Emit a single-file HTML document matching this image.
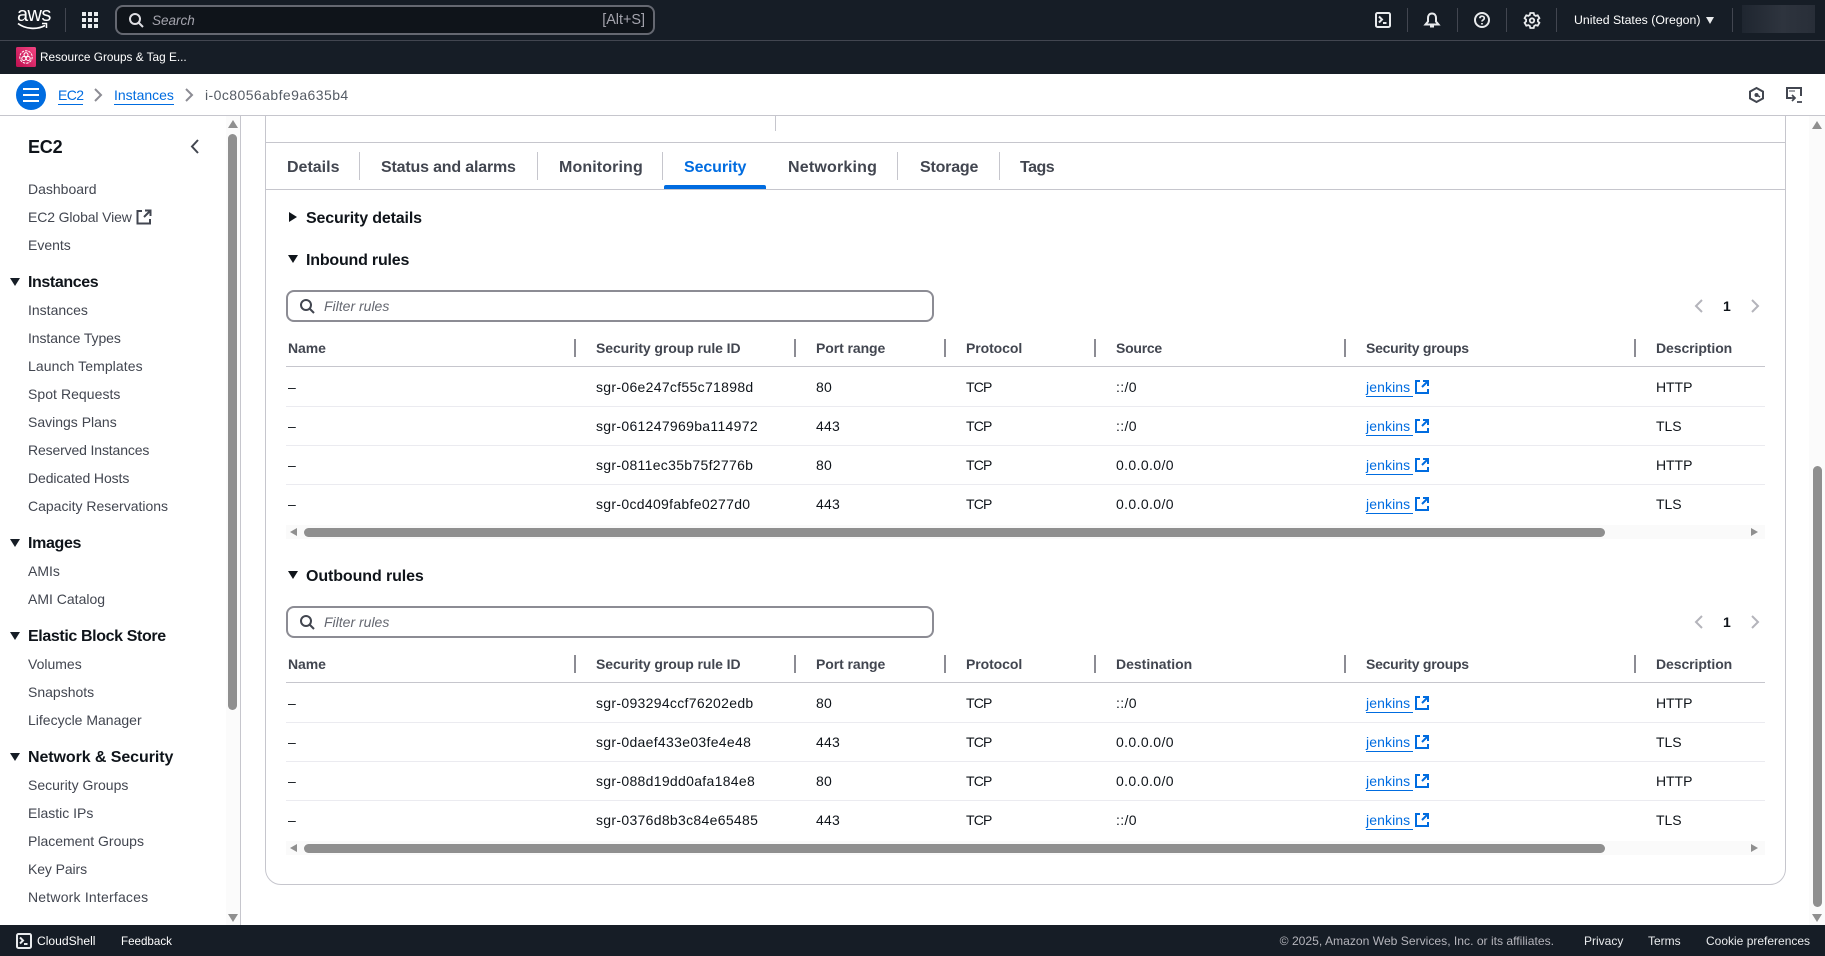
<!DOCTYPE html>
<html lang="en"><head><meta charset="utf-8"><title>Instance security</title>
<style>
*{box-sizing:border-box}
html,body{margin:0;padding:0;width:1825px;height:956px;overflow:hidden;background:#fff;font-family:"Liberation Sans",sans-serif;color:#0f141a}
.a{position:absolute}
.t{position:absolute;white-space:nowrap;line-height:20px;height:20px}
svg{position:absolute;overflow:visible}
.top{background:#161d26}
.d{position:absolute;width:1px;background:#424650}
.nv{font-size:14px;color:#424650;left:28px}
.sh{font-size:16px;font-weight:700;left:28px;color:#0f141a}
.tri{position:absolute;left:10px;width:0;height:0;border-left:5.500px solid transparent;border-right:5.500px solid transparent;border-top:8.500px solid #161d26}
.tab{font-size:16px;font-weight:700;color:#424650;top:158px}
.td{position:absolute;top:152px;height:28px;width:1px;background:#c6c6cd}
.h{font-size:14px;font-weight:700;color:#424650;letter-spacing:-.08px}
.c{font-size:14px;color:#0f141a}
.l{position:absolute;left:286px;width:1479px;height:1px;background:#ebebf0}
.hd{position:absolute;width:2px;height:18px;background:#8c8c94}
.lk{font-size:14px;color:#006ce0;left:1366px;width:47px;border-bottom:1px solid #006ce0;height:20px;letter-spacing:.1px}
.ft{font-size:12px;color:#d1d5db;top:931px}
.x1{left:288px}.x2{left:596px}.x3{left:816px}.x4{left:966px}.x5{left:1116px}.x7{left:1656px}
.c.x2{letter-spacing:.31px}.c.x3{letter-spacing:.2px}.c.x4{letter-spacing:-.8px}.c.x5{letter-spacing:.38px}.c.x7{letter-spacing:-.05px}
.h.x5{letter-spacing:-.25px}
.h.sg{letter-spacing:-.25px;left:1366px}
</style></head><body>

<!-- top bars -->
<div class="a top" style="left:0;top:0;width:1825px;height:74px"></div>
<div class="a" style="left:0;top:40px;width:1825px;height:1px;background:#424650"></div>
<div class="t" style="left:17px;top:4px;font-size:20px;color:#fff;letter-spacing:-.6px;line-height:22px;height:22px">aws</div>
<svg style="left:17px;top:22px" width="32" height="9" viewBox="0 0 32 9" fill="none"><path d="M1 1.500C8 7 20 8 28 3.500" stroke="#fff" stroke-width="1.700"/><path d="M25 1.500h4.500V6" stroke="#fff" stroke-width="1.500"/></svg>
<div class="d" style="left:65px;top:8px;height:24px"></div>
<svg style="left:82px;top:12px" width="16" height="16" viewBox="0 0 16 16" fill="#e9ebed"><rect x="0" y="0" width="4" height="4"/><rect x="6" y="0" width="4" height="4"/><rect x="12" y="0" width="4" height="4"/><rect x="0" y="6" width="4" height="4"/><rect x="6" y="6" width="4" height="4"/><rect x="12" y="6" width="4" height="4"/><rect x="0" y="12" width="4" height="4"/><rect x="6" y="12" width="4" height="4"/><rect x="12" y="12" width="4" height="4"/></svg>
<div class="a" style="left:115px;top:5px;width:540px;height:30px;background:#0f141a;border:2px solid #656871;border-radius:8px"></div>
<svg style="left:128px;top:12px" width="16" height="16" viewBox="0 0 16 16" fill="none" stroke="#dedee3" stroke-width="2"><circle cx="7" cy="7" r="5"/><path d="m15 15-4.500-4.500"/></svg>
<div class="t" style="left:152px;top:11px;font-size:13.500px;font-style:italic;color:#a4a4ad">Search</div>
<div class="t" style="right:1180px;top:10px;font-size:14.400px;color:#a4a4ad">[Alt+S]</div>

<svg style="left:1375px;top:12px" width="16" height="16" viewBox="0 0 16 16" fill="none" stroke="#e9ebed" stroke-width="2"><rect x="1" y="1" width="14" height="14" rx="1.500"/><path d="m4 4.500 3 3-3 3M8 11h3.500"/></svg>
<div class="d" style="left:1407px;top:8px;height:24px"></div>
<svg style="left:1424px;top:12px" width="16" height="16" viewBox="0 0 16 16" fill="none" stroke="#e9ebed" stroke-width="2"><path d="M8 1.500C5.500 1.500 4 3.500 4 6v3.500L1.500 12.500h13L12 9.500V6C12 3.500 10.500 1.500 8 1.500Z"/><path d="M6 14.500h4"/></svg>
<div class="d" style="left:1457px;top:8px;height:24px"></div>
<svg style="left:1474px;top:12px" width="16" height="16" viewBox="0 0 16 16" fill="none" stroke="#e9ebed" stroke-width="2"><circle cx="8" cy="8" r="7"/><path d="M5.800 6.200C6 4.800 7 4.200 8 4.200c1.300 0 2.300.8 2.300 2 0 1.700-2.300 1.700-2.300 3.300" stroke-width="1.700"/><path d="M8 11v1.500" stroke-width="1.700"/></svg>
<div class="d" style="left:1506px;top:8px;height:24px"></div>
<svg style="left:1524px;top:12px" width="16" height="16" viewBox="0 0 16 16" fill="none" stroke="#e9ebed" stroke-width="1.800"><path d="M6.300 1h3.400l.5 2 1.500.9 2-.6 1.700 2.900-1.500 1.400v1.800l1.500 1.400-1.700 2.900-2-.6-1.500.9-.5 2H6.300l-.5-2-1.500-.9-2 .6L.6 10.800l1.500-1.400V7.600L.6 6.200l1.700-2.900 2 .6L5.800 3Z"/><circle cx="8" cy="8.500" r="2.200"/></svg>
<div class="d" style="left:1556px;top:8px;height:24px"></div>
<div class="t" style="left:1574px;top:10px;font-size:12.300px;color:#fff">United States (Oregon)</div>
<div class="a" style="left:1706px;top:17px;width:0;height:0;border-left:4px solid transparent;border-right:4px solid transparent;border-top:7px solid #e9ebed"></div>
<div class="d" style="left:1732px;top:8px;height:24px"></div>
<div class="a" style="left:1742px;top:5px;width:73px;height:28px;background:linear-gradient(90deg,#1f2630,#2e343e 55%,#282e38)"></div>

<svg style="left:16px;top:47px" width="20" height="20" viewBox="0 0 20 20"><defs><linearGradient id="g" x1="0" y1="1" x2="1" y2="0"><stop offset="0" stop-color="#bd0f4f"/><stop offset="1" stop-color="#f34482"/></linearGradient></defs><rect width="20" height="20" rx="1.500" fill="url(#g)"/><g fill="none" stroke="#fff" stroke-width="1"><circle cx="10" cy="10" r="6.200" stroke-dasharray="2.500 1"/><circle cx="10" cy="7.800" r="2"/><circle cx="7.800" cy="11.500" r="2"/><circle cx="12.200" cy="11.500" r="2"/></g></svg>
<div class="t" style="left:40px;top:47px;font-size:11.800px;color:#fff">Resource Groups &amp; Tag E...</div>

<!-- breadcrumbs -->
<div class="a" style="left:0;top:115px;width:1825px;height:1px;background:#c6c6cd"></div>
<div class="a" style="left:16px;top:80px;width:30px;height:30px;border-radius:50%;background:#006ce0"></div>
<div class="a" style="left:23px;top:88px;width:16px;height:2px;background:#fff"></div>
<div class="a" style="left:23px;top:94px;width:16px;height:2px;background:#fff"></div>
<div class="a" style="left:23px;top:100px;width:16px;height:2px;background:#fff"></div>
<div class="t" style="left:58px;top:85px;font-size:14px;color:#006ce0;border-bottom:1px solid #006ce0;height:20px;letter-spacing:-.6px">EC2</div>
<svg style="left:94px;top:88px" width="8" height="14" viewBox="0 0 8 14" fill="none" stroke="#8c8c94" stroke-width="2"><path d="m1 1 6 6-6 6"/></svg>
<div class="t" style="left:114px;top:85px;font-size:14px;color:#006ce0;border-bottom:1px solid #006ce0;height:20px">Instances</div>
<svg style="left:185px;top:88px" width="8" height="14" viewBox="0 0 8 14" fill="none" stroke="#8c8c94" stroke-width="2"><path d="m1 1 6 6-6 6"/></svg>
<div class="t" style="left:205px;top:85px;font-size:14px;color:#545b64;letter-spacing:.43px">i-0c8056abfe9a635b4</div>
<svg style="left:1749px;top:87px" width="15" height="16" viewBox="0 0 15 16" fill="none" stroke="#424650" stroke-width="2"><path d="M7.500 1 14 4.600v6.800L7.500 15 1 11.400V4.600Z"/><circle cx="7.500" cy="8" r="2" fill="#424650" stroke="none"/><path d="m8 8 3 2" stroke-width="1.500"/></svg>
<svg style="left:1786px;top:87px" width="16" height="16" viewBox="0 0 16 16" fill="none" stroke="#424650" stroke-width="2"><path d="M5 11H1V1h14v8"/><path d="M3.500 4h5" stroke-dasharray="1 1" stroke-width="2"/><path d="m6 8 3 3-3 3M2 11h6M11 15h5" stroke-width="1.700"/></svg>

<!-- sidebar -->
<div class="a" style="left:226px;top:116px;width:14px;height:809px;background:#fbfbfb"></div>
<div class="a" style="left:240px;top:116px;width:1px;height:809px;background:#c6c6cd"></div>
<div class="a" style="left:228px;top:120px;width:0;height:0;border-left:5px solid transparent;border-right:5px solid transparent;border-bottom:8px solid #8f8f8f"></div>
<div class="a" style="left:228px;top:134px;width:9px;height:576px;background:#8f8f8f;border-radius:5px"></div>
<div class="a" style="left:228px;top:914px;width:0;height:0;border-left:5px solid transparent;border-right:5px solid transparent;border-top:8px solid #8f8f8f"></div>
<div class="t" style="left:28px;top:136px;font-size:18px;font-weight:700;line-height:22px;height:22px;letter-spacing:-.2px">EC2</div>
<svg style="left:191px;top:139px" width="8" height="15" viewBox="0 0 8 15" fill="none" stroke="#424650" stroke-width="2"><path d="M7 1 1 7.500 7 14"/></svg>
<div class="t nv" style="top:179px">Dashboard</div>
<div class="t nv" style="top:207px;letter-spacing:-.12px">EC2 Global View</div>
<svg style="left:136px;top:209px" width="16" height="16" viewBox="0 0 16 16" fill="none" stroke="#424650" stroke-width="2"><path d="M6 2H1.500v12.500H14V10M9 1.500h5.500V7M14.500 1.500 8 8"/></svg>
<div class="t nv" style="top:235px">Events</div>
<div class="tri" style="top:278px"></div><div class="t sh" style="top:273px;letter-spacing:-.4px">Instances</div>
<div class="t nv" style="top:300px">Instances</div>
<div class="t nv" style="top:328px;letter-spacing:-.08px">Instance Types</div>
<div class="t nv" style="top:356px;letter-spacing:.08px">Launch Templates</div>
<div class="t nv" style="top:384px;letter-spacing:.05px">Spot Requests</div>
<div class="t nv" style="top:412px">Savings Plans</div>
<div class="t nv" style="top:440px;letter-spacing:-.14px">Reserved Instances</div>
<div class="t nv" style="top:468px;letter-spacing:-.1px">Dedicated Hosts</div>
<div class="t nv" style="top:496px">Capacity Reservations</div>
<div class="tri" style="top:539px"></div><div class="t sh" style="top:534px;letter-spacing:-.35px">Images</div>
<div class="t nv" style="top:561px">AMIs</div>
<div class="t nv" style="top:589px">AMI Catalog</div>
<div class="tri" style="top:632px"></div><div class="t sh" style="top:627px;letter-spacing:-.38px">Elastic Block Store</div>
<div class="t nv" style="top:654px">Volumes</div>
<div class="t nv" style="top:682px">Snapshots</div>
<div class="t nv" style="top:710px">Lifecycle Manager</div>
<div class="tri" style="top:753px"></div><div class="t sh" style="top:748px;letter-spacing:-.08px">Network &amp; Security</div>
<div class="t nv" style="top:775px">Security Groups</div>
<div class="t nv" style="top:803px">Elastic IPs</div>
<div class="t nv" style="top:831px">Placement Groups</div>
<div class="t nv" style="top:859px;letter-spacing:-.1px">Key Pairs</div>
<div class="t nv" style="top:887px;letter-spacing:.2px">Network Interfaces</div>

<!-- main scrollbar -->
<div class="a" style="left:1809px;top:116px;width:16px;height:809px;background:#fbfbfb"></div>
<div class="a" style="left:1812px;top:121px;width:0;height:0;border-left:5px solid transparent;border-right:5px solid transparent;border-bottom:8px solid #8f8f8f"></div>
<div class="a" style="left:1813px;top:466px;width:9px;height:441px;background:#8f8f8f;border-radius:5px"></div>
<div class="a" style="left:1812px;top:914px;width:0;height:0;border-left:5px solid transparent;border-right:5px solid transparent;border-top:8px solid #8f8f8f"></div>

<!-- card -->
<div class="a" style="left:265px;top:100px;width:1521px;height:785px;border:1px solid #c6c6cd;border-radius:0 0 16px 16px;clip-path:inset(16px -1px -1px -1px)"></div>
<div class="a" style="left:775px;top:116px;width:1px;height:15px;background:#c6c6cd"></div>
<div class="a" style="left:265px;top:142px;width:1521px;height:1px;background:#c6c6cd"></div>
<div class="a" style="left:265px;top:189px;width:1521px;height:1px;background:#c6c6cd"></div>
<div class="t tab" style="left:287px">Details</div><div class="td" style="left:359px"></div>
<div class="t tab" style="left:381px;letter-spacing:-.18px">Status and alarms</div><div class="td" style="left:537px"></div>
<div class="t tab" style="left:559px;letter-spacing:.12px">Monitoring</div><div class="td" style="left:662px"></div>
<div class="t tab" style="left:684px;color:#006ce0;letter-spacing:-.1px">Security</div>
<div class="a" style="left:664px;top:185px;width:102px;height:4px;background:#006ce0;border-radius:2px 2px 0 0"></div>
<div class="t tab" style="left:788px;letter-spacing:.2px">Networking</div><div class="td" style="left:897px"></div>
<div class="t tab" style="left:920px;letter-spacing:-.2px">Storage</div><div class="td" style="left:999px"></div>
<div class="t tab" style="left:1020px;letter-spacing:-.5px">Tags</div>

<div class="a" style="left:289px;top:212px;width:0;height:0;border-top:5.500px solid transparent;border-bottom:5.500px solid transparent;border-left:8px solid #0f141a"></div>
<div class="t" style="left:306px;top:209px;font-size:16px;font-weight:700;letter-spacing:-.15px">Security details</div>
<div class="a" style="left:288px;top:255px;width:0;height:0;border-left:5.500px solid transparent;border-right:5.500px solid transparent;border-top:8px solid #0f141a"></div>
<div class="t" style="left:306px;top:251px;font-size:16px;font-weight:700;letter-spacing:-.2px">Inbound rules</div>

<!-- inbound -->
<div class="a" style="left:286px;top:290px;width:648px;height:32px;border:2px solid #8c8c94;border-radius:8px"></div>
<svg style="left:299px;top:298px" width="16" height="16" viewBox="0 0 16 16" fill="none" stroke="#424650" stroke-width="2"><circle cx="7" cy="7" r="5"/><path d="m15 15-4.500-4.500"/></svg>
<div class="t" style="left:324px;top:296px;font-size:14px;font-style:italic;color:#656871">Filter rules</div>
<svg style="left:1695px;top:299px" width="8" height="14" viewBox="0 0 8 14" fill="none" stroke="#b4b4bb" stroke-width="2"><path d="M7 1 1 7l6 6"/></svg>
<div class="t" style="left:1723px;top:296px;font-size:14px;font-weight:700">1</div>
<svg style="left:1751px;top:299px" width="8" height="14" viewBox="0 0 8 14" fill="none" stroke="#b4b4bb" stroke-width="2"><path d="m1 1 6 6-6 6"/></svg>

<div class="t h x1" style="top:338px">Name</div><div class="hd" style="left:574px;top:339px"></div>
<div class="t h x2" style="top:338px">Security group rule ID</div><div class="hd" style="left:794px;top:339px"></div>
<div class="t h x3" style="top:338px">Port range</div><div class="hd" style="left:944px;top:339px"></div>
<div class="t h x4" style="top:338px">Protocol</div><div class="hd" style="left:1094px;top:339px"></div>
<div class="t h x5" style="top:338px">Source</div><div class="hd" style="left:1344px;top:339px"></div>
<div class="t h sg" style="top:338px">Security groups</div><div class="hd" style="left:1634px;top:339px"></div>
<div class="t h x7" style="top:338px">Description</div>
<div class="l" style="top:366px;background:#c6c6cd"></div>
<div class="l" style="top:406px"></div><div class="l" style="top:445px"></div><div class="l" style="top:484px"></div>

<div class="t c x1" style="top:377px">–</div><div class="t c x2" style="top:377px">sgr-06e247cf55c71898d</div><div class="t c x3" style="top:377px">80</div><div class="t c x4" style="top:377px">TCP</div><div class="t c x5" style="top:377px">::/0</div><div class="t lk" style="top:377px">jenkins</div><div class="t c x7" style="top:377px">HTTP</div>
<div class="t c x1" style="top:416px">–</div><div class="t c x2" style="top:416px">sgr-061247969ba114972</div><div class="t c x3" style="top:416px">443</div><div class="t c x4" style="top:416px">TCP</div><div class="t c x5" style="top:416px">::/0</div><div class="t lk" style="top:416px">jenkins</div><div class="t c x7" style="top:416px">TLS</div>
<div class="t c x1" style="top:455px">–</div><div class="t c x2" style="top:455px">sgr-0811ec35b75f2776b</div><div class="t c x3" style="top:455px">80</div><div class="t c x4" style="top:455px">TCP</div><div class="t c x5" style="top:455px">0.0.0.0/0</div><div class="t lk" style="top:455px">jenkins</div><div class="t c x7" style="top:455px">HTTP</div>
<div class="t c x1" style="top:494px">–</div><div class="t c x2" style="top:494px">sgr-0cd409fabfe0277d0</div><div class="t c x3" style="top:494px">443</div><div class="t c x4" style="top:494px">TCP</div><div class="t c x5" style="top:494px">0.0.0.0/0</div><div class="t lk" style="top:494px">jenkins</div><div class="t c x7" style="top:494px">TLS</div>
<svg style="left:1415px;top:380px" width="14" height="14" viewBox="0 0 14 14" fill="none" stroke="#006ce0" stroke-width="2"><path d="M5 1H1v12h12V9M8 1h5v5M13 1 7 7"/></svg>
<svg style="left:1415px;top:419px" width="14" height="14" viewBox="0 0 14 14" fill="none" stroke="#006ce0" stroke-width="2"><path d="M5 1H1v12h12V9M8 1h5v5M13 1 7 7"/></svg>
<svg style="left:1415px;top:458px" width="14" height="14" viewBox="0 0 14 14" fill="none" stroke="#006ce0" stroke-width="2"><path d="M5 1H1v12h12V9M8 1h5v5M13 1 7 7"/></svg>
<svg style="left:1415px;top:497px" width="14" height="14" viewBox="0 0 14 14" fill="none" stroke="#006ce0" stroke-width="2"><path d="M5 1H1v12h12V9M8 1h5v5M13 1 7 7"/></svg>

<div class="a" style="left:286px;top:525px;width:1479px;height:14px;background:#fafafa"></div>
<div class="a" style="left:290px;top:528px;width:0;height:0;border-top:4.500px solid transparent;border-bottom:4.500px solid transparent;border-right:7px solid #8f8f8f"></div>
<div class="a" style="left:304px;top:528px;width:1301px;height:9px;background:#8f8f8f;border-radius:5px"></div>
<div class="a" style="left:1751px;top:528px;width:0;height:0;border-top:4.500px solid transparent;border-bottom:4.500px solid transparent;border-left:7px solid #8f8f8f"></div>

<!-- outbound -->
<div class="a" style="left:288px;top:571px;width:0;height:0;border-left:5.500px solid transparent;border-right:5.500px solid transparent;border-top:8px solid #0f141a"></div>
<div class="t" style="left:306px;top:567px;font-size:16px;font-weight:700;letter-spacing:-.1px">Outbound rules</div>
<div class="a" style="left:286px;top:606px;width:648px;height:32px;border:2px solid #8c8c94;border-radius:8px"></div>
<svg style="left:299px;top:614px" width="16" height="16" viewBox="0 0 16 16" fill="none" stroke="#424650" stroke-width="2"><circle cx="7" cy="7" r="5"/><path d="m15 15-4.500-4.500"/></svg>
<div class="t" style="left:324px;top:612px;font-size:14px;font-style:italic;color:#656871">Filter rules</div>
<svg style="left:1695px;top:615px" width="8" height="14" viewBox="0 0 8 14" fill="none" stroke="#b4b4bb" stroke-width="2"><path d="M7 1 1 7l6 6"/></svg>
<div class="t" style="left:1723px;top:612px;font-size:14px;font-weight:700">1</div>
<svg style="left:1751px;top:615px" width="8" height="14" viewBox="0 0 8 14" fill="none" stroke="#b4b4bb" stroke-width="2"><path d="m1 1 6 6-6 6"/></svg>

<div class="t h x1" style="top:654px">Name</div><div class="hd" style="left:574px;top:655px"></div>
<div class="t h x2" style="top:654px">Security group rule ID</div><div class="hd" style="left:794px;top:655px"></div>
<div class="t h x3" style="top:654px">Port range</div><div class="hd" style="left:944px;top:655px"></div>
<div class="t h x4" style="top:654px">Protocol</div><div class="hd" style="left:1094px;top:655px"></div>
<div class="t h x5" style="top:654px;letter-spacing:0">Destination</div><div class="hd" style="left:1344px;top:655px"></div>
<div class="t h sg" style="top:654px">Security groups</div><div class="hd" style="left:1634px;top:655px"></div>
<div class="t h x7" style="top:654px">Description</div>
<div class="l" style="top:682px;background:#c6c6cd"></div>
<div class="l" style="top:722px"></div><div class="l" style="top:761px"></div><div class="l" style="top:800px"></div>

<div class="t c x1" style="top:693px">–</div><div class="t c x2" style="top:693px">sgr-093294ccf76202edb</div><div class="t c x3" style="top:693px">80</div><div class="t c x4" style="top:693px">TCP</div><div class="t c x5" style="top:693px">::/0</div><div class="t lk" style="top:693px">jenkins</div><div class="t c x7" style="top:693px">HTTP</div>
<div class="t c x1" style="top:732px">–</div><div class="t c x2" style="top:732px">sgr-0daef433e03fe4e48</div><div class="t c x3" style="top:732px">443</div><div class="t c x4" style="top:732px">TCP</div><div class="t c x5" style="top:732px">0.0.0.0/0</div><div class="t lk" style="top:732px">jenkins</div><div class="t c x7" style="top:732px">TLS</div>
<div class="t c x1" style="top:771px">–</div><div class="t c x2" style="top:771px">sgr-088d19dd0afa184e8</div><div class="t c x3" style="top:771px">80</div><div class="t c x4" style="top:771px">TCP</div><div class="t c x5" style="top:771px">0.0.0.0/0</div><div class="t lk" style="top:771px">jenkins</div><div class="t c x7" style="top:771px">HTTP</div>
<div class="t c x1" style="top:810px">–</div><div class="t c x2" style="top:810px">sgr-0376d8b3c84e65485</div><div class="t c x3" style="top:810px">443</div><div class="t c x4" style="top:810px">TCP</div><div class="t c x5" style="top:810px">::/0</div><div class="t lk" style="top:810px">jenkins</div><div class="t c x7" style="top:810px">TLS</div>
<svg style="left:1415px;top:696px" width="14" height="14" viewBox="0 0 14 14" fill="none" stroke="#006ce0" stroke-width="2"><path d="M5 1H1v12h12V9M8 1h5v5M13 1 7 7"/></svg>
<svg style="left:1415px;top:735px" width="14" height="14" viewBox="0 0 14 14" fill="none" stroke="#006ce0" stroke-width="2"><path d="M5 1H1v12h12V9M8 1h5v5M13 1 7 7"/></svg>
<svg style="left:1415px;top:774px" width="14" height="14" viewBox="0 0 14 14" fill="none" stroke="#006ce0" stroke-width="2"><path d="M5 1H1v12h12V9M8 1h5v5M13 1 7 7"/></svg>
<svg style="left:1415px;top:813px" width="14" height="14" viewBox="0 0 14 14" fill="none" stroke="#006ce0" stroke-width="2"><path d="M5 1H1v12h12V9M8 1h5v5M13 1 7 7"/></svg>

<div class="a" style="left:286px;top:841px;width:1479px;height:14px;background:#fafafa"></div>
<div class="a" style="left:290px;top:844px;width:0;height:0;border-top:4.500px solid transparent;border-bottom:4.500px solid transparent;border-right:7px solid #8f8f8f"></div>
<div class="a" style="left:304px;top:844px;width:1301px;height:9px;background:#8f8f8f;border-radius:5px"></div>
<div class="a" style="left:1751px;top:844px;width:0;height:0;border-top:4.500px solid transparent;border-bottom:4.500px solid transparent;border-left:7px solid #8f8f8f"></div>

<!-- footer -->
<div class="a top" style="left:0;top:925px;width:1825px;height:31px"></div>
<svg style="left:16px;top:933px" width="16" height="16" viewBox="0 0 16 16" fill="none" stroke="#e9ebed" stroke-width="2"><rect x="1" y="1" width="14" height="14" rx="1.500"/><path d="m4 4.500 3 3-3 3M8 11h3.500"/></svg>
<div class="t" style="left:37px;top:931px;font-size:12.100px;color:#fff">CloudShell</div>
<div class="t" style="left:121px;top:932px;font-size:11.600px;color:#fff">Feedback</div>
<div class="t ft" style="right:271px;font-size:12.120px;color:#b4b4bb">© 2025, Amazon Web Services, Inc. or its affiliates.</div>
<div class="t ft" style="left:1584px;color:#e9ebed">Privacy</div>
<div class="t ft" style="left:1648px;color:#e9ebed">Terms</div>
<div class="t ft" style="left:1706px;color:#e9ebed">Cookie preferences</div>
</body></html>
